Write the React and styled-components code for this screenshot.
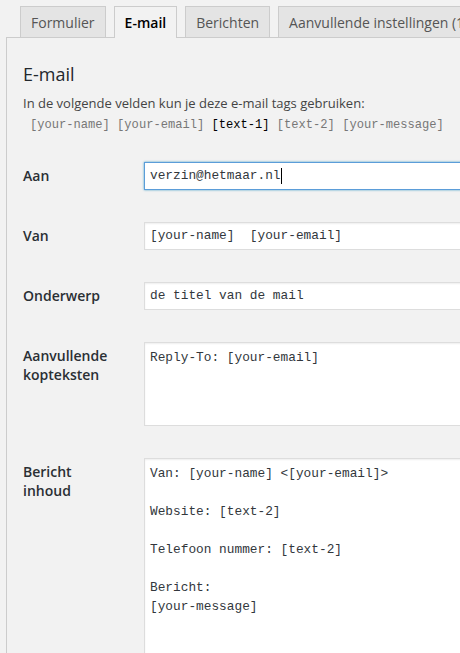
import React from "react";
import styled, { createGlobalStyle, css } from "styled-components";

const GlobalStyle = createGlobalStyle`
  html, body {
    margin: 0;
    padding: 0;
    overflow: hidden;
    background: #f2f2f2;
  }
  body {
    font-family: "Open Sans", "Noto Sans", sans-serif;
    color: #23282d;
  }
  * { box-sizing: border-box; }
`;

const mono = `"Liberation Mono", "DejaVu Sans Mono", monospace`;

const Page = styled.div`
  width: 680px;
  padding: 6px 0 0 6px;
`;

const TabList = styled.div`
  display: flex;
  align-items: flex-end;
  gap: 8px;
  padding-left: 14px;
`;

const Tab = styled.button`
  height: 31px;
  padding: 0 10px;
  border: 1px solid #cccccc;
  border-bottom: none;
  background: #e4e4e4;
  color: #555555;
  font-family: "Open Sans", "Noto Sans", sans-serif;
  font-size: 14px;
  font-weight: 400;
  white-space: nowrap;
  cursor: pointer;

  ${(p) =>
    p.$active &&
    css`
      height: 32px;
      margin-bottom: -1px;
      position: relative;
      z-index: 1;
      background: #f2f2f2;
      color: #000000;
      font-weight: 600;
    `}
`;

const Panel = styled.section`
  border: 1px solid #cccccc;
  border-right: none;
  background: #f2f2f2;
  padding: 25px 16px 0 16px;
  min-height: 640px;
`;

const Heading = styled.h2`
  margin: 0 0 8px;
  font-size: 18px;
  font-weight: 400;
  line-height: 23.4px;
  color: #23282d;
`;

const Intro = styled.p`
  margin: 0;
  font-size: 13px;
  line-height: 19.5px;
  color: #444444;
`;

const TagLine = styled.div`
  margin-top: 1px;
  padding-left: 7px;
  font-family: ${mono};
  font-size: 12.1px;
  line-height: 20px;
  white-space: pre;
`;

const Tag = styled.span`
  color: ${(p) => (p.$unused ? "#000000" : "#777777")};
`;

const Fields = styled.div`
  margin-top: 11px;
`;

const Row = styled.div`
  display: grid;
  grid-template-columns: 121px 1fr;
  padding: 16px 0;
`;

const Label = styled.label`
  padding-top: 4px;
  font-size: 14px;
  font-weight: 600;
  line-height: 19px;
  color: #2a2f34;
`;

const Field = styled.div`
  position: relative;
  width: 440px;
`;

const fieldBase = css`
  display: block;
  width: 100%;
  border: 1px solid #dddddd;
  background: #ffffff;
  color: #32373c;
  font-family: ${mono};
  font-size: 12.8px;
  box-shadow: inset 0 1px 2px rgba(0, 0, 0, 0.07);
  outline: none;
  margin: 0;
`;

const TextInput = styled.input`
  ${fieldBase};
  height: 28px;
  padding: 0 5px;

  ${(p) =>
    p.$focused &&
    css`
      border-color: #5b9dd9;
      box-shadow: 0 0 2px rgba(30, 140, 190, 0.8);
    `}
`;

const TextArea = styled.textarea`
  ${fieldBase};
  height: ${(p) => p.$height}px;
  padding: 5px 5px;
  line-height: 19px;
  resize: none;
  overflow: hidden;
`;

/* text caret shown after the value of the focused field */
const Caret = styled.span`
  position: absolute;
  top: 6px;
  left: calc(6px + ${(p) => p.$chars}ch);
  width: 1px;
  height: 16px;
  background: #000000;
  font-family: ${mono};
  font-size: 12.8px;
`;

const tabs = ["Formulier", "E-mail", "Berichten", "Aanvullende instellingen (1)"];

const tags = [
  { name: "[your-name]" },
  { name: "[your-email]" },
  { name: "[text-1]", unused: true },
  { name: "[text-2]" },
  { name: "[your-message]" },
];

const bodyText = `Van: [your-name] <[your-email]>

Website: [text-2]

Telefoon nummer: [text-2]

Bericht:
[your-message]`;

export default function App() {
  const to = "verzin@hetmaar.nl";
  return (
    <>
      <GlobalStyle />
      <Page>
        <TabList>
          {tabs.map((t) => (
            <Tab key={t} $active={t === "E-mail"}>
              {t}
            </Tab>
          ))}
        </TabList>
        <Panel>
          <Heading>E-mail</Heading>
          <Intro>In de volgende velden kun je deze e-mail tags gebruiken:</Intro>
          <TagLine>
            {tags.map((t, i) => (
              <React.Fragment key={t.name}>
                {i > 0 && " "}
                <Tag $unused={t.unused}>{t.name}</Tag>
              </React.Fragment>
            ))}
          </TagLine>
          <Fields>
            <Row>
              <Label>Aan</Label>
              <Field>
                <TextInput $focused defaultValue={to} />
                <Caret $chars={to.length} />
              </Field>
            </Row>
            <Row>
              <Label>Van</Label>
              <Field>
                <TextInput defaultValue="[your-name]  [your-email]" />
              </Field>
            </Row>
            <Row>
              <Label>Onderwerp</Label>
              <Field>
                <TextInput defaultValue="de titel van de mail" />
              </Field>
            </Row>
            <Row>
              <Label>
                Aanvullende
                <br />
                kopteksten
              </Label>
              <Field>
                <TextArea $height={84} defaultValue="Reply-To: [your-email]" />
              </Field>
            </Row>
            <Row>
              <Label>
                Bericht
                <br />
                inhoud
              </Label>
              <Field>
                <TextArea $height={260} defaultValue={bodyText} />
              </Field>
            </Row>
          </Fields>
        </Panel>
      </Page>
    </>
  );
}
